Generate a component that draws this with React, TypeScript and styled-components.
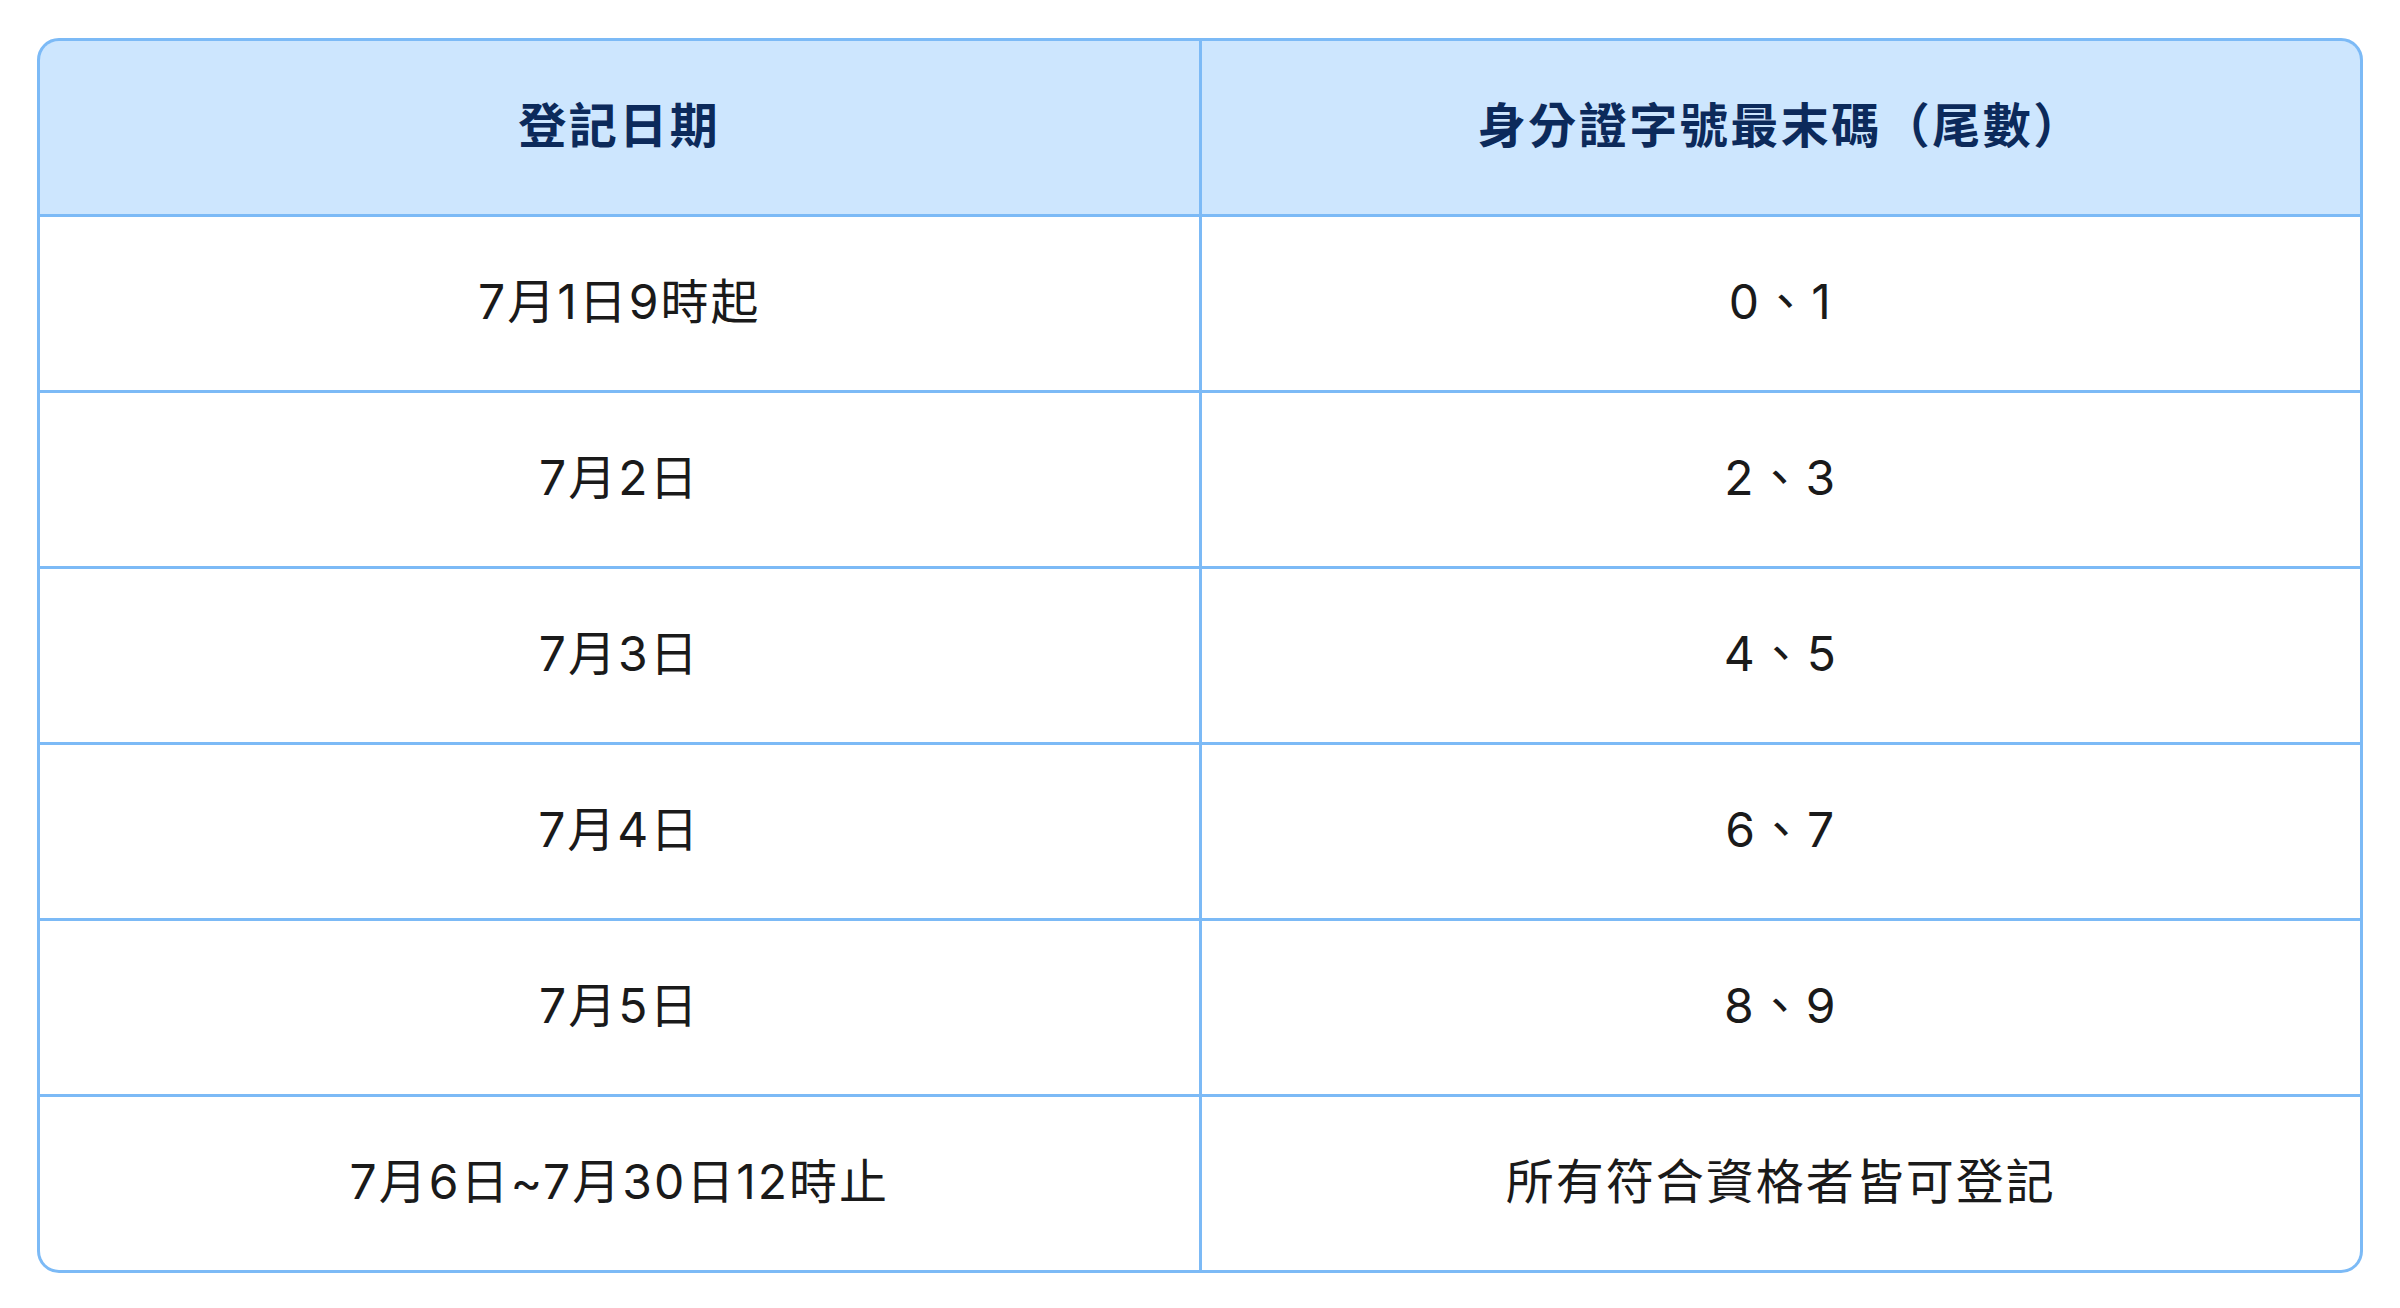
import React from 'react'
import styled, { createGlobalStyle } from 'styled-components'

const GlobalStyle = createGlobalStyle`
  html, body {
    margin: 0;
    padding: 0;
    background: #ffffff;
  }
  body {
    font-family: Inter, "Noto Sans CJK TC", "Noto Sans", sans-serif;
  }
`

const S = {
  Page: styled.div`
    padding: 38px 37px;
  `,

  Table: styled.div`
    display: grid;
    grid-template-columns: 1fr 1fr;
    grid-auto-rows: 173px;
    gap: 3px;
    background: #7cbaf6;
    border: 3px solid #7cbaf6;
    border-radius: 22px;
    overflow: hidden;
  `,

  HeadCell: styled.div`
    display: flex;
    align-items: center;
    justify-content: center;
    padding-bottom: 12px;
    box-sizing: border-box;
    background: #cde6fe;
    color: #0c2a5b;
    font-family: "Noto Sans CJK TC", sans-serif;
    font-weight: 700;
    font-size: 48px;
    letter-spacing: 2.5px;
  `,

  Cell: styled.div`
    display: flex;
    align-items: center;
    justify-content: center;
    padding-bottom: 12px;
    box-sizing: border-box;
    background: #ffffff;
    color: #1a1a1a;
    font-size: 48px;
    font-weight: 400;
    letter-spacing: 2px;
  `,
}

const rows: [string, string][] = [
  ['7月1日9時起', '0、1'],
  ['7月2日', '2、3'],
  ['7月3日', '4、5'],
  ['7月4日', '6、7'],
  ['7月5日', '8、9'],
  ['7月6日~7月30日12時止', '所有符合資格者皆可登記'],
]

const App: React.FC = () => {
  return (
    <>
      <GlobalStyle />
      <S.Page>
        <S.Table>
          <S.HeadCell>登記日期</S.HeadCell>
          <S.HeadCell>身分證字號最末碼（尾數）</S.HeadCell>
          {rows.map(([date, digits]) => (
            <React.Fragment key={date}>
              <S.Cell>{date}</S.Cell>
              <S.Cell>{digits}</S.Cell>
            </React.Fragment>
          ))}
        </S.Table>
      </S.Page>
    </>
  )
}

export default App
